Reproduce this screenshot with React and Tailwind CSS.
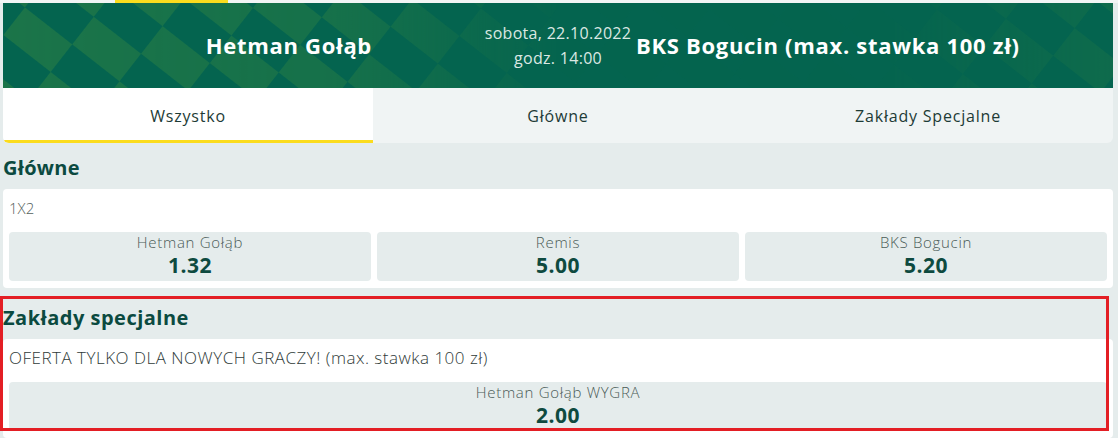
import React from "react";

const odds = [
  { label: "Hetman Gołąb", value: "1.32" },
  { label: "Remis", value: "5.00" },
  { label: "BKS Bogucin", value: "5.20" },
];

const tabs = ["Wszystko", "Główne", "Zakłady Specjalne"];

const HeaderPattern = () => (
  <svg className="absolute inset-0 h-full w-full" width="1110" height="85" viewBox="0 0 1110 85" preserveAspectRatio="none">
    <defs>
      <pattern id="chk" width="120" height="70" patternUnits="userSpaceOnUse" patternTransform="rotate(38) translate(20 -10)">
        <rect x="0" y="0" width="60" height="35" fill="#1b7449" />
        <rect x="60" y="35" width="60" height="35" fill="#1b7449" />
      </pattern>
      <linearGradient id="fade" x1="0" x2="1" y1="0" y2="0">
        <stop offset="0" stopColor="#fff" stopOpacity="1" />
        <stop offset="0.3" stopColor="#fff" stopOpacity="0.8" />
        <stop offset="0.5" stopColor="#fff" stopOpacity="0.05" />
        <stop offset="0.8" stopColor="#fff" stopOpacity="0.05" />
        <stop offset="1" stopColor="#fff" stopOpacity="0.45" />
      </linearGradient>
      <mask id="m">
        <rect width="1110" height="85" fill="url(#fade)" />
      </mask>
    </defs>
    <rect width="1110" height="85" fill="url(#chk)" mask="url(#m)" />
  </svg>
);

const OddButton = ({ label, value }) => (
  <div className="flex h-[49px] flex-1 flex-col items-center rounded-[4px] bg-[#e5ecec]">
    <span className="text-[15px] font-light leading-[20px] tracking-[0.7px] text-[#4a5b57]">{label}</span>
    <span className="text-[21px] font-bold leading-[26px] tracking-[0.5px] text-[#0e4a3f]">{value}</span>
  </div>
);

export default function App() {
  return (
    <div className="relative min-h-[438px] overflow-hidden bg-[#e5ecec] font-['Open_Sans',sans-serif]">
      <div className="flex h-[3px] bg-[#f2f5f5]">
        <div className="ml-[115px] w-[113px] bg-[#fbdc1e]" />
      </div>

      <div className="ml-[3px] mr-[5px]">
        <div className="relative h-[85px] overflow-hidden bg-[#04644f]">
          <HeaderPattern />
          <div className="relative flex h-full items-center text-white">
            <div className="w-[480px] pr-[111px] text-right text-[22px] font-bold tracking-[0.7px]">Hetman Gołąb</div>
            <div className="w-[150px] text-center text-[16px] leading-[25px] tracking-[0.3px] text-[#dbe8e3]">
              <div>sobota, 22.10.2022</div>
              <div>godz. 14:00</div>
            </div>
            <div className="pl-[3px] text-[22px] font-bold tracking-[0.7px]">BKS Bogucin (max. stawka 100 zł)</div>
          </div>
        </div>

        <div className="grid h-[55px] grid-cols-3 overflow-hidden rounded-b-[6px] bg-[#f0f4f4]">
          {tabs.map((t, i) => (
            <div
              key={t}
              className={
                i === 0
                  ? "flex items-center justify-center border-b-[3px] border-[#fbdc1e] bg-white pt-[3px] text-[16px] tracking-[0.8px] text-[#1d3b36]"
                  : "flex items-center justify-center text-[16px] tracking-[0.8px] text-[#1d3b36]"
              }
            >
              {t}
            </div>
          ))}
        </div>

        <div className="pt-[13px] pb-[9px] text-[20px] font-bold leading-[24px] tracking-[0.3px] text-[#0b4a40]">Główne</div>
        <div className="rounded-[4px] bg-white px-[6px] pt-[8px] pb-[7px]">
          <div className="mb-[13px] text-[15px] font-light leading-[22px] text-[#555f5d]">1X2</div>
          <div className="flex gap-[6px]">
            {odds.map((o) => (
              <OddButton key={o.label} label={o.label} value={o.value} />
            ))}
          </div>
        </div>

        <div className="mt-[5px] pt-[13px] pb-[9px] text-[20px] font-bold leading-[24px] tracking-[0.5px] text-[#0b4a40]">Zakłady specjalne</div>
        <div className="rounded-[4px] bg-white px-[6px] pt-[8px] pb-[7px]">
          <div className="mb-[13px] text-[17px] font-light leading-[22px] tracking-[0.5px] text-[#2f3b39]">
            OFERTA TYLKO DLA NOWYCH GRACZY! (max. stawka 100 zł)
          </div>
          <div className="flex">
            <OddButton label="Hetman Gołąb WYGRA" value="2.00" />
          </div>
        </div>
      </div>

      <div className="pointer-events-none absolute left-0 top-[296px] h-[135px] w-[1109px] border-[3px] border-[#e31e24]" />
    </div>
  );
}
